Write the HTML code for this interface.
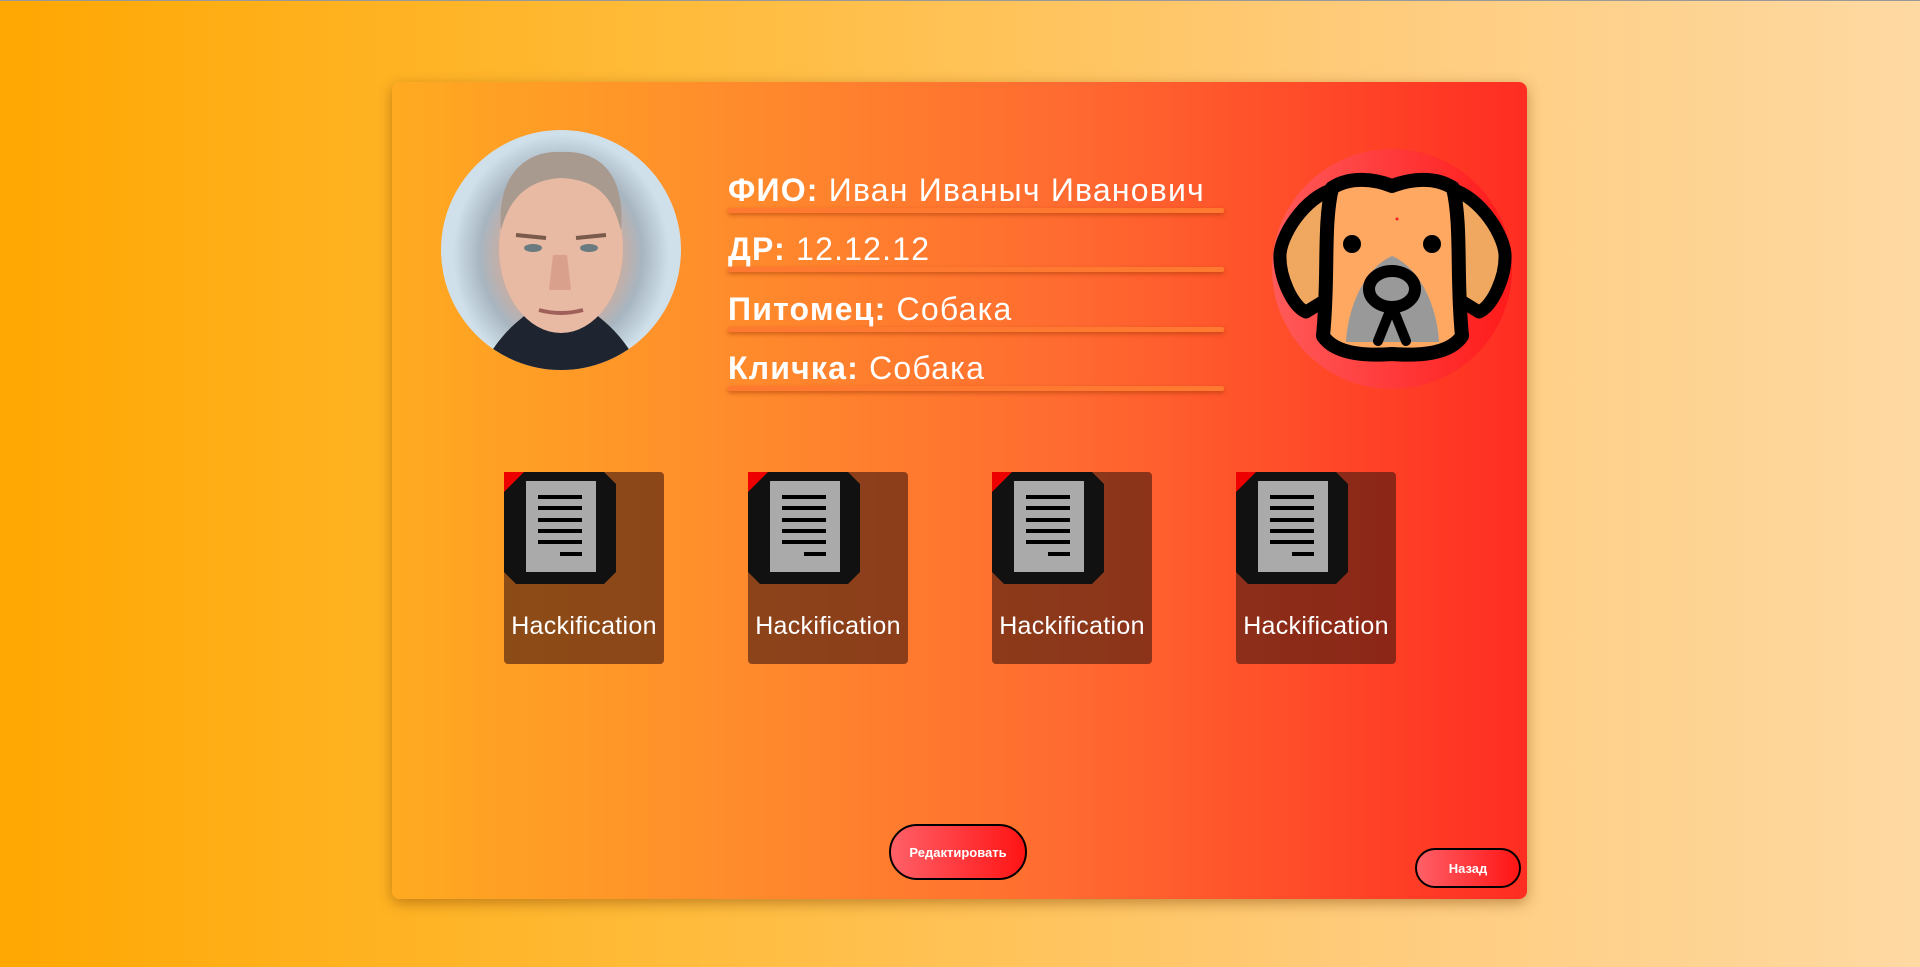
<!DOCTYPE html>
<html><head><meta charset="utf-8"><style>
*{margin:0;padding:0;box-sizing:border-box}
html,body{width:1920px;height:967px;overflow:hidden}
body{background:linear-gradient(90deg,#ffa702 0%,#ffbb3a 35%,#ffcb7a 70%,#fed9a2 100%);font-family:"Liberation Sans",sans-serif;position:relative;border-top:1px solid #999}
.card{position:absolute;left:392px;top:81px;width:1135px;height:817px;border-radius:8px;background:linear-gradient(90deg,#ffaa20 0%,#ff8c2c 30%,#ff6a30 60%,#ff2d22 100%);box-shadow:0 4px 14px rgba(120,60,0,.45)}
.ava{position:absolute;left:441px;top:129px;width:240px;height:240px;border-radius:50%;background:radial-gradient(ellipse 45% 50% at 50% 52%,#e9c3b0 0%,#d9aa95 45%,#a7b5c0 75%,#cfe0ea 100%);overflow:hidden}
.row{position:absolute;left:728px;color:#fff;font-size:32px;letter-spacing:1.2px;width:520px;white-space:nowrap}
.row b{font-weight:bold}
.row span{font-weight:normal}
.ul{position:absolute;left:728px;width:496px;height:5px;background:#ff7a30;box-shadow:0 2px 4px rgba(150,50,0,.5);border-radius:2px}
.dogc{position:absolute;left:1272px;top:148px;width:240px;height:240px;border-radius:50%;background:linear-gradient(90deg,#ff5a5a,#ff1a1a)}
.tile{position:absolute;top:471px;width:160px;height:192px;border-radius:4px;background:rgba(70,25,15,.62)}
.tile svg{position:absolute;left:0;top:0}
.tile p{position:absolute;left:-4px;width:168px;top:140px;text-align:center;color:#fff;font-size:25px;letter-spacing:.3px}
.btn{position:absolute;border:2px solid #000;border-radius:30px;background:linear-gradient(90deg,#ff6068,#ff1414);color:#fff;font-weight:bold;font-size:13px;display:flex;align-items:center;justify-content:center}
</style></head><body>
<div class="card"></div>
<div class="ava"><svg width="240" height="240" viewBox="0 0 240 240">
<path d="M40,240 C60,200 80,190 90,180 L150,180 C160,190 180,200 200,240Z" fill="#1e2530"/>
<ellipse cx="120" cy="118" rx="62" ry="85" fill="#e8b9a3"/>
<path d="M60,100 C55,40 90,20 120,22 C155,20 185,40 180,100 C172,70 160,50 120,48 C85,50 68,70 60,100Z" fill="#a99a90"/>
<path d="M75,105 L105,108 M135,108 L165,105" stroke="#7a5a4a" stroke-width="4"/>
<ellipse cx="92" cy="118" rx="9" ry="4" fill="#6a7a80"/><ellipse cx="148" cy="118" rx="9" ry="4" fill="#6a7a80"/>
<path d="M112,125 L108,160 L130,160 L126,125" fill="#d9a08c"/>
<path d="M98,180 Q120,186 142,180" stroke="#a0605a" stroke-width="4" fill="none"/>
</svg></div>
<div class="row" style="top:171px"><b>ФИО:</b> <span>Иван Иваныч Иванович</span></div>
<div class="ul" style="top:207px"></div>
<div class="row" style="top:230px"><b>ДР:</b> <span>12.12.12</span></div>
<div class="ul" style="top:266px"></div>
<div class="row" style="top:290px"><b>Питомец:</b> <span>Собака</span></div>
<div class="ul" style="top:326px"></div>
<div class="row" style="top:349px"><b>Кличка:</b> <span>Собака</span></div>
<div class="ul" style="top:385px"></div>
<div class="dogc"></div>
<svg style="position:absolute;left:1270px;top:145px" width="245" height="245" viewBox="0 0 245 245">
<g stroke="#000" stroke-width="13" stroke-linejoin="round" stroke-linecap="round">
<path d="M70,42 C40,45 12,85 10,108 C9,130 22,160 36,166 L62,150 Z" fill="#f0a860"/>
<path d="M175,42 C205,45 233,85 235,108 C236,130 223,160 209,166 L183,150 Z" fill="#f0a860"/>
</g>
<path d="M62,42 C80,30 105,33 122,40 C140,33 165,30 183,42 C192,80 186,130 192,190 C180,208 150,210 122,208 C95,210 65,208 53,190 C59,130 53,80 62,42 Z" fill="#fea862"/>
<path d="M76,196 C78,160 95,122 122,110 C150,122 167,160 169,196 Z" fill="#999"/>
<path d="M62,42 C80,30 105,33 122,40 C140,33 165,30 183,42 C192,80 186,130 192,190 C180,208 150,210 122,208 C95,210 65,208 53,190 C59,130 53,80 62,42 Z" fill="none" stroke="#000" stroke-width="14" stroke-linejoin="round"/>
<ellipse cx="122" cy="143" rx="23" ry="18" fill="#999" stroke="#000" stroke-width="12"/>
<path d="M122,160 L108,195 M122,160 L136,195" stroke="#000" stroke-width="10" fill="none" stroke-linecap="round"/>
<circle cx="82" cy="98" r="9"/><circle cx="162" cy="98" r="9"/>
<circle cx="127" cy="73" r="1.5" fill="#e22"/>
</svg>
<div class="tile" style="left:504px"><svg width="112" height="112" viewBox="0 0 112 112"><polygon points="0,0 100,0 112,12 112,100 100,112 12,112 0,100" fill="#111"/><polygon points="0,0 20,0 0,20" fill="#e00"/><rect x="22" y="9" width="70" height="91" fill="#aaa"/><g fill="#000"><rect x="34" y="23" width="44" height="4"/><rect x="34" y="34" width="44" height="4"/><rect x="34" y="46" width="44" height="4"/><rect x="34" y="57" width="44" height="4"/><rect x="34" y="68" width="44" height="4"/><rect x="56" y="80" width="22" height="4"/></g></svg><p>Hackification</p></div>
<div class="tile" style="left:748px"><svg width="112" height="112" viewBox="0 0 112 112"><polygon points="0,0 100,0 112,12 112,100 100,112 12,112 0,100" fill="#111"/><polygon points="0,0 20,0 0,20" fill="#e00"/><rect x="22" y="9" width="70" height="91" fill="#aaa"/><g fill="#000"><rect x="34" y="23" width="44" height="4"/><rect x="34" y="34" width="44" height="4"/><rect x="34" y="46" width="44" height="4"/><rect x="34" y="57" width="44" height="4"/><rect x="34" y="68" width="44" height="4"/><rect x="56" y="80" width="22" height="4"/></g></svg><p>Hackification</p></div>
<div class="tile" style="left:992px"><svg width="112" height="112" viewBox="0 0 112 112"><polygon points="0,0 100,0 112,12 112,100 100,112 12,112 0,100" fill="#111"/><polygon points="0,0 20,0 0,20" fill="#e00"/><rect x="22" y="9" width="70" height="91" fill="#aaa"/><g fill="#000"><rect x="34" y="23" width="44" height="4"/><rect x="34" y="34" width="44" height="4"/><rect x="34" y="46" width="44" height="4"/><rect x="34" y="57" width="44" height="4"/><rect x="34" y="68" width="44" height="4"/><rect x="56" y="80" width="22" height="4"/></g></svg><p>Hackification</p></div>
<div class="tile" style="left:1236px"><svg width="112" height="112" viewBox="0 0 112 112"><polygon points="0,0 100,0 112,12 112,100 100,112 12,112 0,100" fill="#111"/><polygon points="0,0 20,0 0,20" fill="#e00"/><rect x="22" y="9" width="70" height="91" fill="#aaa"/><g fill="#000"><rect x="34" y="23" width="44" height="4"/><rect x="34" y="34" width="44" height="4"/><rect x="34" y="46" width="44" height="4"/><rect x="34" y="57" width="44" height="4"/><rect x="34" y="68" width="44" height="4"/><rect x="56" y="80" width="22" height="4"/></g></svg><p>Hackification</p></div>
<div class="btn" style="left:889px;top:823px;width:138px;height:56px">Редактировать</div>
<div class="btn" style="left:1415px;top:847px;width:106px;height:40px">Назад</div>
</body></html>
